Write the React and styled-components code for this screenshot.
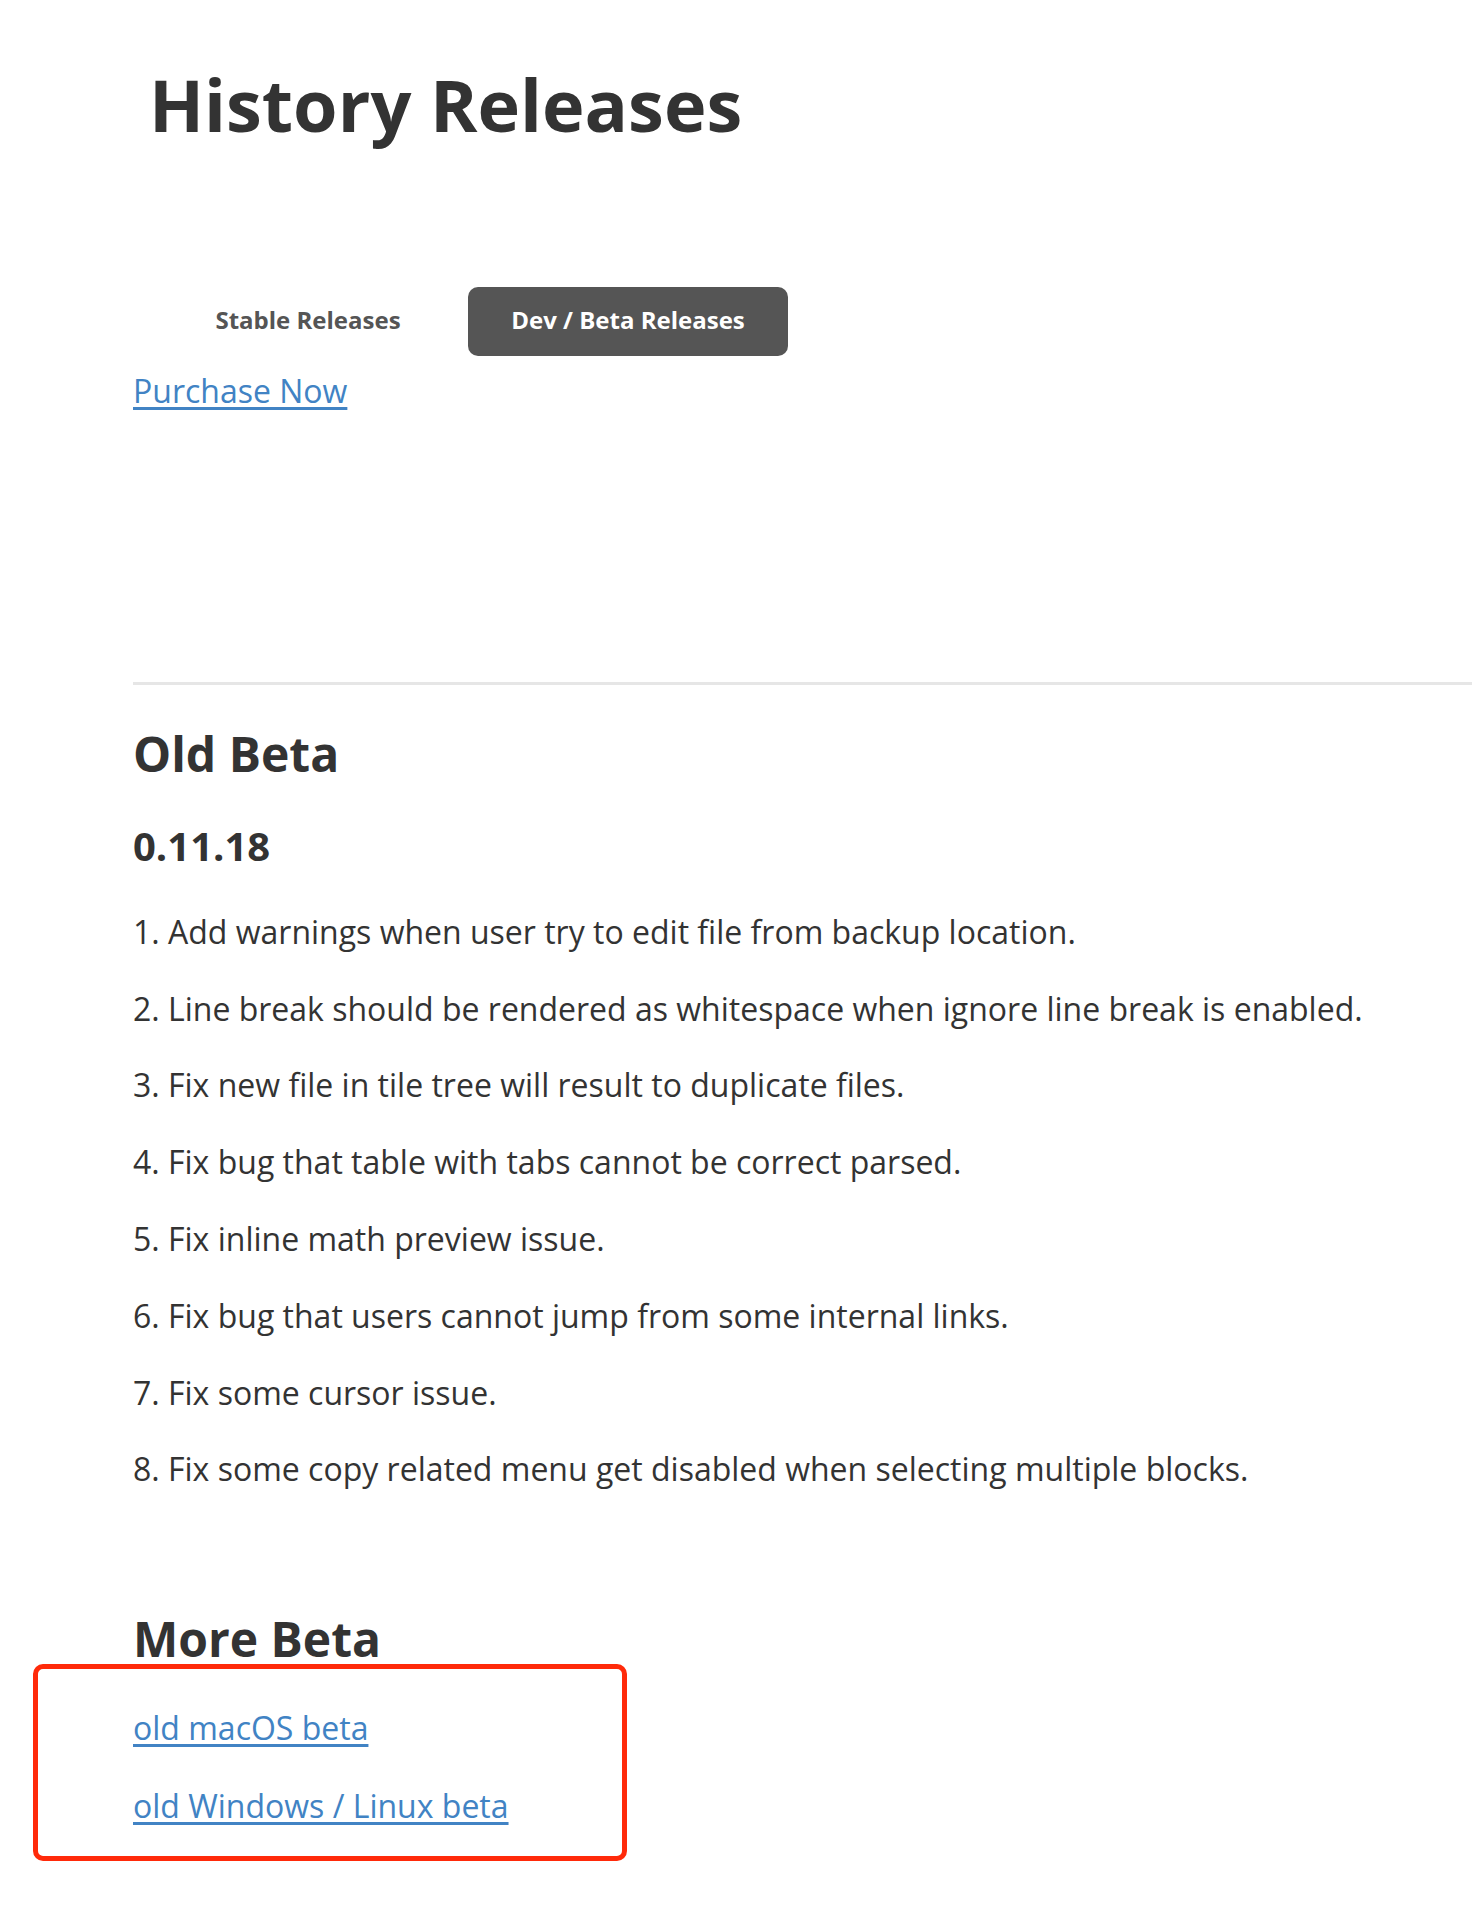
import React from 'react';
import styled, { createGlobalStyle } from 'styled-components';

const GlobalStyle = createGlobalStyle`
  body {
    margin: 0;
    background: #fff;
    font-family: "Open Sans", "Liberation Sans", sans-serif;
    color: #333;
  }
`;

const notes = [
  'Add warnings when user try to edit file from backup location.',
  'Line break should be rendered as whitespace when ignore line break is enabled.',
  'Fix new file in tile tree will result to duplicate files.',
  'Fix bug that table with tabs cannot be correct parsed.',
  'Fix inline math preview issue.',
  'Fix bug that users cannot jump from some internal links.',
  'Fix some cursor issue.',
  'Fix some copy related menu get disabled when selecting multiple blocks.',
];

const App = () => {
  return (
    <>
      <GlobalStyle />
      <Page>
        <Title>History Releases</Title>
        <Tabs>
          <Tab>Stable Releases</Tab>
          <Tab active>Dev / Beta Releases</Tab>
        </Tabs>
        <Purchase href="#">Purchase Now</Purchase>

        <Divider />

        <Section>
          <H2>Old Beta</H2>
          <H3>0.11.18</H3>
          {notes.map((n, i) => (
            <Note key={i}>{i + 1}. {n}</Note>
          ))}
        </Section>

        <H2 more>More Beta</H2>
        <Highlight>
          <LinkRow>
            <TextLink href="#">old macOS beta</TextLink>
          </LinkRow>
          <LinkRow>
            <TextLink href="#">old Windows / Linux beta</TextLink>
          </LinkRow>
        </Highlight>
      </Page>
    </>
  );
};

const Page = styled.div`
  padding: 61px 0 60px 133px;
  min-height: 1920px;
  box-sizing: border-box;
`;

const Title = styled.h1`
  margin: 0 0 0 16px;
  font-size: 72px;
  line-height: 1.2;
  font-weight: 700;
  color: #333;
`;

const Tabs = styled.div`
  display: flex;
  margin: 140px 0 0 15px;
`;

const Tab = styled.button`
  width: 320px;
  height: 69px;
  padding: 0 0 4px;
  border: none;
  border-radius: 10px;
  background: ${({ active }) => (active ? '#555' : 'transparent')};
  color: ${({ active }) => (active ? '#fff' : '#555')};
  font-family: "Open Sans", "Liberation Sans", sans-serif;
  font-size: 24px;
  font-weight: 700;
  cursor: pointer;
`;

const Purchase = styled.a`
  display: inline-block;
  margin-top: 13px;
  font-size: 32px;
  line-height: 1.4;
  color: #4183c4;
  text-decoration: underline;
  text-underline-offset: 4px;
`;

const Divider = styled.hr`
  margin: 268px 0 0;
  border: none;
  height: 3px;
  background: #e6e6e6;
`;

const Section = styled.section`
  padding-top: 40px;
`;

const H2 = styled.h2`
  margin: ${({ more }) => (more ? '118px 0 0' : '0')};
  font-size: 48px;
  line-height: 1.2;
  font-weight: 700;
  color: #333;
`;

const H3 = styled.h3`
  margin: 39px 0 40px;
  font-size: 40px;
  line-height: 1.2;
  font-weight: 700;
  color: #333;
`;

const Note = styled.p`
  margin: 0 0 32px;
  font-size: 32px;
  line-height: 1.4;
  color: #333;

  &:last-child {
    margin-bottom: 0;
  }
`;

const Highlight = styled.div`
  width: 594px;
  box-sizing: border-box;
  margin: -4px 0 0 -100px;
  padding: 37px 0 28px 95px;
  border: 5px solid #ff2a0a;
  border-radius: 10px;
`;

const LinkRow = styled.div`
  font-size: 32px;
  line-height: 1.4;
  & + & {
    margin-top: 33px;
  }
`;

const TextLink = styled.a`
  color: #4183c4;
  text-decoration: underline;
  text-underline-offset: 4px;
`;

export default App;
